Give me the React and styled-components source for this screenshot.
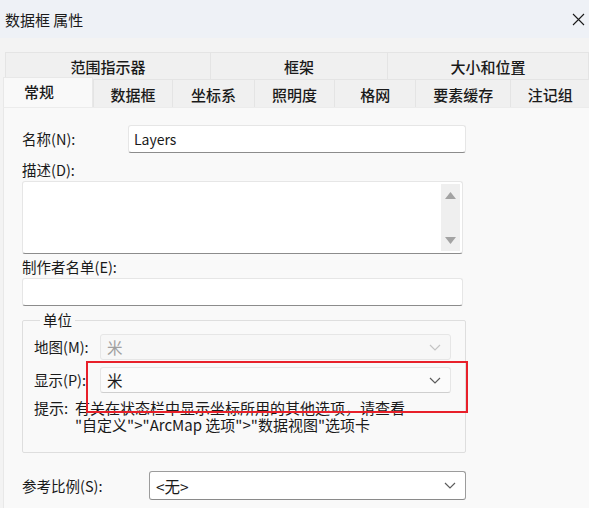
import React from "react";
import styled, { createGlobalStyle } from "styled-components";

const GlobalStyle = createGlobalStyle`
  body {
    margin: 0;
    background: #f9f9f9;
    font-family: "Noto Sans CJK SC", "Noto Sans", sans-serif;
    color: #1a1a1a;
  }
`;

const Window = styled.div`
  width: 589px;
  height: 508px;
  overflow: hidden;
  background: #f3f3f3;
  display: flex;
  flex-direction: column;
`;

const TitleBar = styled.div`
  height: 38px;
  flex: none;
  background: #eef1f6;
  display: flex;
  align-items: center;
  justify-content: space-between;
  padding: 0 4px 0 5px;
  font-size: 15px;
  line-height: 1;
`;

const TabArea = styled.div`
  flex: none;
  padding-top: 14px;
  display: flex;
  flex-direction: column;
`;

const TabRow = styled.div`
  display: flex;
  height: ${p => p.$h}px;
  padding-left: 5px;
  align-items: flex-end;
`;

const Tab = styled.div`
  position: relative;
  box-sizing: border-box;
  width: ${p => p.$w}px;
  height: 100%;
  display: flex;
  align-items: center;
  justify-content: center;
  background: #f0f0f0;
  border: 1px solid #e4e4e4;
  border-bottom: none;
  margin-right: -1px;
  font-size: 15px;
  font-weight: 500;
  line-height: 1;
  padding-top: 1px;
  color: #1a1a1a;
`;

const ActiveTab = styled(Tab)`
  height: calc(100% + 2px);
  margin-left: -2px;
  margin-right: 0;
  width: ${p => p.$w + 4}px;
  background: #f9f9f9;
  justify-content: flex-start;
  padding-left: 20px;
  padding-bottom: 3px;
  z-index: 1;
  border-color: #e8e8e8;
`;

const Panel = styled.div`
  flex: 1;
  margin-left: 3px;
  background: #f9f9f9;
  border-left: 1px solid #e8e8e8;
  border-top: 1px solid #ececec;
  padding: 17px 0 0 18px;
  font-size: 14.5px;
`;

const FieldRow = styled.div`
  display: flex;
  align-items: center;
  margin-top: ${p => p.$mt || 0}px;
`;

const Label = styled.div`
  width: ${p => (p.$w ? `${p.$w}px` : "auto")};
  flex: none;
  line-height: 20px;
  white-space: nowrap;
  margin-top: ${p => p.$mt || 0}px;
`;

const TextBox = styled.div`
  box-sizing: border-box;
  width: ${p => p.$w}px;
  height: ${p => p.$h || 28}px;
  background: #ffffff;
  border: 1px solid #e6e6e6;
  border-bottom: 1px solid #8c8c8c;
  border-radius: 3px;
  display: flex;
  align-items: center;
  padding-left: 5px;
  font-size: 14px;
  margin-top: ${p => p.$mt || 0}px;
`;

const TextArea = styled(TextBox)`
  align-items: stretch;
  justify-content: flex-end;
  padding: 2px 2px 2px 0;
`;

const ScrollBar = styled.div`
  width: 19px;
  background: #efefef;
  display: flex;
  flex-direction: column;
  align-items: center;
  justify-content: space-between;
  padding: 8px 0 7px;
`;

const GroupBox = styled.fieldset`
  box-sizing: border-box;
  position: relative;
  width: 444px;
  height: 143px;
  margin: 4px 0 0 0;
  padding: 4px 0 0 11px;
  border: 1px solid #dedede;
  border-radius: 2px;
`;

const Legend = styled.legend`
  padding: 0 3px;
  margin-left: 6px;
  line-height: 20px;
  font-size: 14.5px;
`;

const UnitRow = styled.div`
  display: flex;
  align-items: center;
  height: 26px;
  margin-bottom: 7px;
`;

const Select = styled.div`
  box-sizing: border-box;
  width: ${p => p.$w}px;
  height: ${p => p.$h || 26}px;
  display: flex;
  align-items: center;
  justify-content: space-between;
  padding: 0 9px 0 6px;
  border-radius: 3px;
  font-size: 15.5px;
  background: ${p => (p.$variant === "disabled" ? "#f7f7f7" : p.$variant === "plain" ? "#fbfbfb" : "#ffffff")};
  color: ${p => (p.$variant === "disabled" ? "#a0a0a0" : "#1a1a1a")};
  border: 1px solid ${p => (p.$variant === "outlined" ? "#9c9c9c" : "#e6e6e6")};
  border-bottom-color: ${p => (p.$variant === "plain" ? "#cfcfcf" : p.$variant === "outlined" ? "#8a8a8a" : "#e6e6e6")};
`;

const Hint = styled.div`
  display: flex;
  font-size: 15px;
  line-height: 17px;
  margin-top: -1px;
`;

const HintLabel = styled.span`
  width: 41px;
  flex: none;
`;

const Highlight = styled.div`
  position: absolute;
  left: 63px;
  top: 31px;
  width: 382px;
  height: 52px;
  box-sizing: border-box;
  border: 2px solid #e8202a;
  pointer-events: none;
`;

const Chevron = ({ color = "#5c5c5c" }) => (
  <svg width="12" height="7" viewBox="0 0 12 7">
    <polyline points="1,1 6,6 11,1" fill="none" stroke={color} strokeWidth="1.2" />
  </svg>
);

const Arrow = ({ up }) => (
  <svg width="11" height="7" viewBox="0 0 11 7">
    <polygon points={up ? "0,7 5.5,0 11,7" : "0,0 5.5,7 11,0"} fill="#a3a3a3" />
  </svg>
);

const CloseIcon = () => (
  <svg width="13" height="13" viewBox="0 0 13 13">
    <path d="M1 1 L12 12 M12 1 L1 12" stroke="#1a1a1a" strokeWidth="1.1" />
  </svg>
);

const topTabs = [
  { label: "范围指示器", w: 206 },
  { label: "框架", w: 178 },
  { label: "大小和位置", w: 202 }
];

const bottomTabs = [
  { label: "数据框", w: 81 },
  { label: "坐标系", w: 83 },
  { label: "照明度", w: 82 },
  { label: "格网", w: 82 },
  { label: "要素缓存", w: 97 },
  { label: "注记组", w: 80 }
];

export default function App() {
  return (
    <Window>
      <GlobalStyle />
      <TitleBar>
        <span>数据框 属性</span>
        <CloseIcon />
      </TitleBar>
      <TabArea>
        <TabRow $h={27}>
          {topTabs.map(t => (
            <Tab key={t.label} $w={t.w}>
              {t.label}
            </Tab>
          ))}
        </TabRow>
        <TabRow $h={28}>
          <ActiveTab $w={86}>常规</ActiveTab>
          {bottomTabs.map(t => (
            <Tab key={t.label} $w={t.w}>
              {t.label}
            </Tab>
          ))}
        </TabRow>
      </TabArea>
      <Panel>
        <FieldRow>
          <Label $w={106}>名称(N):</Label>
          <TextBox $w={338}>Layers</TextBox>
        </FieldRow>
        <Label $mt={7}>描述(D):</Label>
        <TextArea $w={441} $h={73} $mt={1}>
          <ScrollBar>
            <Arrow up />
            <Arrow />
          </ScrollBar>
        </TextArea>
        <Label $mt={3}>制作者名单(E):</Label>
        <TextBox $w={441} $mt={1} />
        <GroupBox>
          <Legend>单位</Legend>
          <UnitRow>
            <Label $w={66}>地图(M):</Label>
            <Select $w={351} $variant="disabled">
              <span>米</span>
              <Chevron color="#c4c4c4" />
            </Select>
          </UnitRow>
          <UnitRow>
            <Label $w={66}>显示(P):</Label>
            <Select $w={351} $variant="plain">
              <span>米</span>
              <Chevron />
            </Select>
          </UnitRow>
          <Hint>
            <HintLabel>提示:</HintLabel>
            <span>
              有关在状态栏中显示坐标所用的其他选项，请查看
              <br />
              "自定义"&gt;"ArcMap 选项"&gt;"数据视图"选项卡
            </span>
          </Hint>
          <Highlight />
        </GroupBox>
        <FieldRow $mt={18}>
          <Label $w={127}>参考比例(S):</Label>
          <Select $w={317} $h={29} $variant="outlined">
            <span>&lt;无&gt;</span>
            <Chevron />
          </Select>
        </FieldRow>
      </Panel>
    </Window>
  );
}
